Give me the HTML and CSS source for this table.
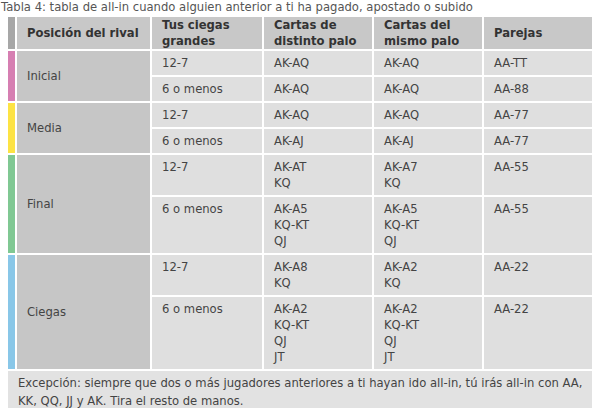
FILE: index.html
```html
<!DOCTYPE html>
<html lang="es">
<head>
<meta charset="utf-8">
<link rel="stylesheet" href="styles.css">
</head>
<body>
<div class="caption">Tabla 4: tabla de all-in cuando alguien anterior a ti ha pagado, apostado o subido</div>
<div class="wrap">
<table class="t">
  <colgroup>
    <col class="c-stripe"><col class="c-pos"><col class="c-ci"><col class="c-d"><col class="c-d"><col class="c-d">
  </colgroup>
  <thead>
    <tr>
      <th class="stripe s-head"></th>
      <th class="h h-pos">Posición del rival</th>
      <th class="h">Tus ciegas<br>grandes</th>
      <th class="h">Cartas de<br>distinto palo</th>
      <th class="h">Cartas del<br>mismo palo</th>
      <th class="h">Parejas</th>
    </tr>
  </thead>
  <tbody>
    <tr>
      <td class="stripe s-pink" rowspan="2"></td>
      <td class="pos" rowspan="2">Inicial</td>
      <td class="d">12-7</td><td class="d">AK-AQ</td><td class="d">AK-AQ</td><td class="d">AA-TT</td>
    </tr>
    <tr>
      <td class="d">6 o menos</td><td class="d">AK-AQ</td><td class="d">AK-AQ</td><td class="d">AA-88</td>
    </tr>
    <tr>
      <td class="stripe s-yellow" rowspan="2"></td>
      <td class="pos" rowspan="2">Media</td>
      <td class="d">12-7</td><td class="d">AK-AQ</td><td class="d">AK-AQ</td><td class="d">AA-77</td>
    </tr>
    <tr>
      <td class="d">6 o menos</td><td class="d">AK-AJ</td><td class="d">AK-AJ</td><td class="d">AA-77</td>
    </tr>
    <tr>
      <td class="stripe s-green" rowspan="2"></td>
      <td class="pos" rowspan="2">Final</td>
      <td class="d">12-7</td><td class="d">AK-AT<br>KQ</td><td class="d">AK-A7<br>KQ</td><td class="d">AA-55</td>
    </tr>
    <tr>
      <td class="d">6 o menos</td><td class="d">AK-A5<br>KQ-KT<br>QJ</td><td class="d">AK-A5<br>KQ-KT<br>QJ</td><td class="d">AA-55</td>
    </tr>
    <tr>
      <td class="stripe s-blue" rowspan="2"></td>
      <td class="pos" rowspan="2">Ciegas</td>
      <td class="d">12-7</td><td class="d">AK-A8<br>KQ</td><td class="d">AK-A2<br>KQ</td><td class="d">AA-22</td>
    </tr>
    <tr>
      <td class="d">6 o menos</td><td class="d">AK-A2<br>KQ-KT<br>QJ<br>JT</td><td class="d">AK-A2<br>KQ-KT<br>QJ<br>JT</td><td class="d">AA-22</td>
    </tr>
  </tbody>
  <tfoot>
    <tr>
      <td class="foot" colspan="6">Excepción: siempre que dos o más jugadores anteriores a ti hayan ido all-in, tú irás all-in con AA, KK, QQ, JJ y AK. Tira el resto de manos.</td>
    </tr>
  </tfoot>
</table>
</div>
</body>
</html>
```

FILE: styles.css
```css
html, body {
  margin: 0;
  padding: 0;
  background: #ffffff;
}
body {
  font-family: "DejaVu Sans", Verdana, sans-serif;
  font-size: 11.6px;
  color: #444444;
}
.caption {
  padding-left: 1px;
  line-height: 15px;
  color: #555555;
}
.wrap {
  padding-left: 6px;
}
.t {
  border-collapse: separate;
  border-spacing: 2px;
  table-layout: fixed;
  width: 588px;
  margin-top: 0;
}
.c-stripe { width: 7px; }
.c-pos { width: 133px; }
.c-ci { width: 110px; }
.c-d { width: 108px; }
.t .stripe {
  padding: 0;
}
.t .h {
  background: #c8c8c8;
  color: #333333;
  font-weight: bold;
  text-align: left;
  vertical-align: middle;
  padding: 0 10px;
  height: 32px;
  line-height: 16px;
}
.t .s-head { background: #a7a7a7; padding: 0; }
.t .s-pink { background: #d67fb2; }
.t .s-yellow { background: #fde344; }
.t .s-green { background: #80c893; }
.t .s-blue { background: #89c7e8; }
.t .pos {
  background: #c6c6c6;
  vertical-align: middle;
  padding: 0 10px;
  line-height: 16px;
  color: #444444;
}
.t .d {
  background: #dfdfdf;
  vertical-align: top;
  padding: 4px 10px;
  line-height: 16px;
}
.t .foot {
  background: #e2e2e2;
  padding: 3px 2px 4px 10px;
  line-height: 18px;
}
```
